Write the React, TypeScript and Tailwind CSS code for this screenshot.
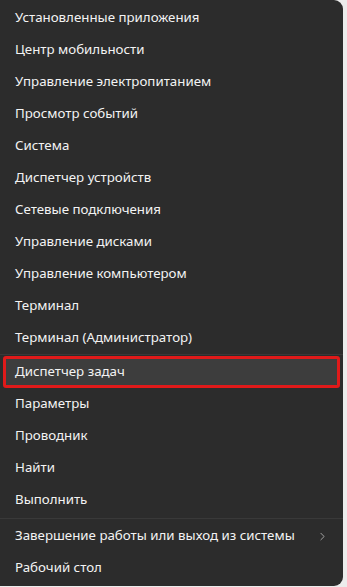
import { ChevronRight } from "lucide-react";

const groupOne = [
  "Установленные приложения",
  "Центр мобильности",
  "Управление электропитанием",
  "Просмотр событий",
  "Система",
  "Диспетчер устройств",
  "Сетевые подключения",
  "Управление дисками",
  "Управление компьютером",
  "Терминал",
  "Терминал (Администратор)",
];

const groupTwo = ["Диспетчер задач", "Параметры", "Проводник", "Найти", "Выполнить"];

const Row = ({ label, active }: { label: string; active?: boolean }) => (
  <div
    className={
      active
        ? "h-8 mx-[3px] flex items-center pl-[9px] bg-[#3d3d3d] border-[3px] border-[#e01a1a] rounded-[3px]"
        : "h-8 flex items-center pl-[15px]"
    }
  >
    <span className="text-[13.3px] text-[#f3f3f3] leading-none">{label}</span>
  </div>
);

export default function App() {
  return (
    <div
      className="w-[347px] h-[587px] bg-[#ececec] flex overflow-hidden"
      style={{ fontFamily: '"Noto Sans", "Open Sans", sans-serif' }}
    >
      <div className="w-[343px] h-[586px] bg-[#2c2c2c] rounded-r-[9px] pt-[2px] flex flex-col">
        {groupOne.map((l) => (
          <Row key={l} label={l} />
        ))}
        <div className="h-[2px] border-t border-[#393939]" />
        {groupTwo.map((l) => (
          <Row key={l} label={l} active={l === "Диспетчер задач"} />
        ))}
        <div className="h-[4px] flex items-center">
          <div className="h-px w-full bg-[#393939]" />
        </div>
        <div className="h-8 flex items-center pl-[15px] pr-[14px] justify-between">
          <span className="text-[13.3px] text-[#f3f3f3] leading-none">
            Завершение работы или выход из системы
          </span>
          <ChevronRight size={13} strokeWidth={1.5} className="text-[#bdbdbd]" />
        </div>
        <Row label="Рабочий стол" />
      </div>
    </div>
  );
}
